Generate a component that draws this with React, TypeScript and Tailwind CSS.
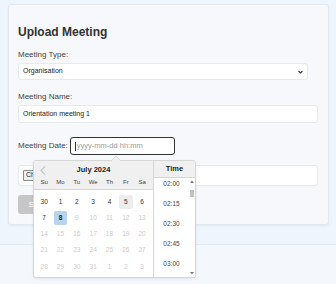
import React from "react";

type Day = { d: number; on?: boolean; sel?: boolean; kb?: boolean };

const weekDays = ["Su", "Mo", "Tu", "We", "Th", "Fr", "Sa"];

const weeks: Day[][] = [
  [{ d: 30, on: true }, { d: 1, on: true }, { d: 2, on: true }, { d: 3, on: true }, { d: 4, on: true }, { d: 5, on: true, kb: true }, { d: 6, on: true }],
  [{ d: 7, on: true }, { d: 8, on: true, sel: true }, { d: 9 }, { d: 10 }, { d: 11 }, { d: 12 }, { d: 13 }],
  [{ d: 14 }, { d: 15 }, { d: 16 }, { d: 17 }, { d: 18 }, { d: 19 }, { d: 20 }],
  [{ d: 21 }, { d: 22 }, { d: 23 }, { d: 24 }, { d: 25 }, { d: 26 }, { d: 27 }],
  [{ d: 28 }, { d: 29 }, { d: 30 }, { d: 31 }, { d: 1 }, { d: 2 }, { d: 3 }],
];

const times = ["02:00", "02:15", "02:30", "02:45", "03:00"];

const DatePopup = () => {
  return (
    <div className="absolute left-[24px] top-[155px] w-[163px] h-[118px] bg-white border border-[#d6d6d6] rounded-[3px] shadow-[0_1px_3px_rgba(0,0,0,0.08)] flex">
      {/* arrow */}
      <svg className="absolute left-[76px] top-[-6px]" width="12" height="7" viewBox="0 0 12 7">
        <path d="M0.5 6.5 L6 1 L11.5 6.5" fill="#f0f0f0" stroke="#d6d6d6" strokeWidth="1" />
      </svg>

      {/* calendar */}
      <div className="w-[120px] border-r border-[#d6d6d6] flex flex-col">
        <div className="relative h-[29px] bg-[#f0f0f0] border-b border-[#d6d6d6] rounded-tl-[3px] pt-[3px]">
          <svg className="absolute left-[6px] top-[5px]" width="6" height="9" viewBox="0 0 6 9">
            <path d="M5 0.5 L1 4.5 L5 8.5" fill="none" stroke="#c8c8c8" strokeWidth="1.2" />
          </svg>
          <div className="h-[11px] leading-[11px] text-[7.5px] font-bold text-center text-[#222]">July 2024</div>
          <div className="mt-[2px] pl-[2px] grid grid-cols-[repeat(7,16.33px)] h-[10px] leading-[10px] text-[6px] text-[#444]">
            {weekDays.map((w) => (
              <div key={w} className="text-center">{w}</div>
            ))}
          </div>
        </div>
        <div className="pl-[2px] pt-[4px]">
          {weeks.map((week, i) => (
            <div key={i} className="grid grid-cols-[repeat(7,16.33px)] h-[16.1px]">
              {week.map((day, j) => (
                <div key={j} className="flex items-center justify-center">
                  <div
                    className={
                      "w-[13.5px] h-[13.5px] rounded-[2px] flex items-center justify-center text-[6.5px] " +
                      (day.sel
                        ? "bg-[#b7d4ee] text-[#222] font-bold"
                        : day.kb
                        ? "bg-[#ededed] text-[#333]"
                        : day.on
                        ? "text-[#333]"
                        : "text-[#cccccc]")
                    }
                  >
                    {day.d}
                  </div>
                </div>
              ))}
            </div>
          ))}
        </div>
      </div>

      {/* time */}
      <div className="flex-1 flex flex-col">
        <div className="h-[17px] bg-[#f0f0f0] border-b border-[#d6d6d6] rounded-tr-[3px] flex items-center justify-center text-[7.5px] font-bold text-[#222]">
          Time
        </div>
        <div className="relative flex-1 overflow-hidden">
          <div className="mt-[-4px] pr-[6px]">
            {times.map((t) => (
              <div key={t} className="h-[20px] leading-[20px] text-center text-[6.5px] text-[#444]">
                {t}
              </div>
            ))}
          </div>
          {/* scrollbar */}
          <div className="absolute right-0 top-0 bottom-0 w-[6px] bg-white flex flex-col items-center">
            <svg className="mt-[2px]" width="4" height="3" viewBox="0 0 4 3">
              <path d="M0 3 L2 0.5 L4 3 Z" fill="#777" />
            </svg>
            <div className="mt-[7px] w-[4px] h-[7px] bg-[#c2c2c2]" />
            <div className="flex-1" />
            <svg className="mb-[2px]" width="4" height="3" viewBox="0 0 4 3">
              <path d="M0 0 L2 2.5 L4 0 Z" fill="#777" />
            </svg>
          </div>
        </div>
      </div>
    </div>
  );
};

export default function App() {
  return (
    <div className="min-h-[284px] bg-[#eef5fd] pt-[4px] flex flex-col font-['Liberation_Sans',Arial,sans-serif] text-[#333]">
      <div className="relative ml-[8px] w-[321px] bg-[#f6f8fb] border border-[#e3e8ef] rounded-[3px] shadow-[0_1px_2px_rgba(0,0,0,0.05)] pt-[20px] pl-[9px] pb-[10px]">
        <h2 className="h-[14px] text-[12px] leading-[14px] font-bold text-[#333]">Upload Meeting</h2>

        <div className="mt-[11px] text-[8px] leading-[10px] text-[#444]">Meeting Type:</div>
        <div className="mt-[3px] w-[290px] h-[17px] bg-white border border-[#e6e9ee] rounded-[3px] flex items-center justify-between pl-[4px] pr-[4px] text-[7px] text-[#222]">
          <span>Organisation</span>
          <svg width="5" height="4" viewBox="0 0 5 4">
            <path d="M0.5 1 L2.5 3 L4.5 1" fill="none" stroke="#333" strokeWidth="1.1" />
          </svg>
        </div>

        <div className="mt-[12px] text-[8px] leading-[10px] text-[#444]">Meeting Name:</div>
        <div className="mt-[3px] w-[300px] h-[18px] bg-white border border-[#e6e9ee] rounded-[3px] flex items-center pl-[4px] text-[7px] text-[#222]">
          Orientation meeting 1
        </div>

        <div className="mt-[14px] h-[18px] flex items-center">
          <span className="text-[8px] leading-[10px] text-[#444]">Meeting Date:</span>
          <div className="ml-[2px] w-[105px] h-[18px] bg-white border border-[#333] rounded-[3px] flex items-center pl-[4px] text-[7.5px] text-[#9a9a9a]">
            <span className="w-px h-[9px] bg-[#333] mr-[1px]" />
            yyyy-mm-dd hh:mm
          </div>
        </div>

        <div className="mt-[10px] w-[300px] h-[21px] bg-white border border-[#e6e9ee] rounded-[3px] flex items-center pl-[4px] text-[7px] text-[#222]">
          <span className="h-[11px] px-[2px] flex items-center bg-[#efefef] border border-[#8a8a8a] rounded-[1px]">Choose File</span>
          <span className="ml-[3px]">No file chosen</span>
        </div>

        <div className="mt-[9px] w-[46px] h-[19px] bg-[#c6c6c6] rounded-[3px] flex items-center justify-center text-[8px] text-white">
          Submit
        </div>

        <DatePopup />
      </div>
      <div className="mt-[19px] flex-1 border-t border-[#e3e9f1] bg-[#f4f8fc]" />
    </div>
  );
}
